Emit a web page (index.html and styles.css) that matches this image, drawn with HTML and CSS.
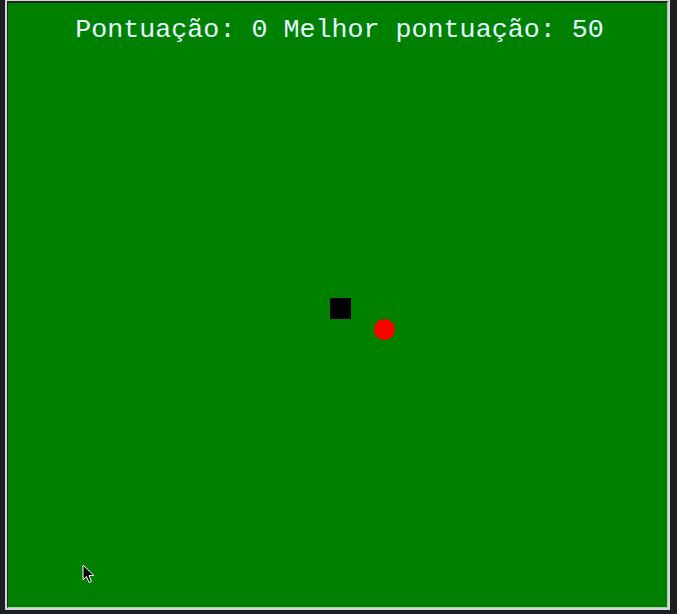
FILE: index.html
```html
<!DOCTYPE html>
<html lang="pt">
<head>
<meta charset="utf-8">
<title>Snake</title>
<link rel="stylesheet" href="styles.css">
</head>
<body>
<div class="frame">
  <div class="board">
    <div class="score">Pontuação: 0 Melhor pontuação: 50</div>
    <div class="snake"></div>
    <div class="food"></div>
    <svg class="cursor" width="13" height="20" viewBox="0 0 13 20">
      <path d="M1 1 L1 16 L4.5 12.5 L7 18.5 L9.5 17.5 L7 11.5 L12 11.5 Z" fill="#000" stroke="#fff" stroke-width="1" stroke-linejoin="miter"/>
    </svg>
  </div>
</div>
</body>
</html>
```
FILE: styles.css
```css
html, body {
  margin: 0;
  padding: 0;
  background: #1d1e24;
  width: 677px;
  height: 614px;
  overflow: hidden;
}
.frame {
  margin-left: 5px;
  width: 661px;
  height: 607px;
  border: 2px solid #d5d5d5;
  border-top-width: 1px;
  display: flex;
}
.board {
  position: relative;
  flex: 1;
  background: #008000;
  border-style: solid;
  border-width: 2px 1px 1px 1px;
  border-color: #1e2a1e #a3d3a3 #a3d3a3 #1e2a1e;
  display: flex;
  flex-direction: column;
  align-items: center;
  padding-top: 12px;
}
.score {
  font-family: "Liberation Mono", "Courier New", monospace;
  font-size: 26.7px;
  line-height: 30px;
  color: #e4ffff;
  white-space: pre;
  margin-left: 4px;
}
.snake {
  position: absolute;
  left: 322px;
  top: 295px;
  width: 21px;
  height: 21px;
  background: #000;
}
.food {
  position: absolute;
  left: 366px;
  top: 316px;
  width: 21px;
  height: 21px;
  border-radius: 50%;
  background: #ff0000;
}
.cursor {
  position: absolute;
  left: 74px;
  top: 561px;
}
```
